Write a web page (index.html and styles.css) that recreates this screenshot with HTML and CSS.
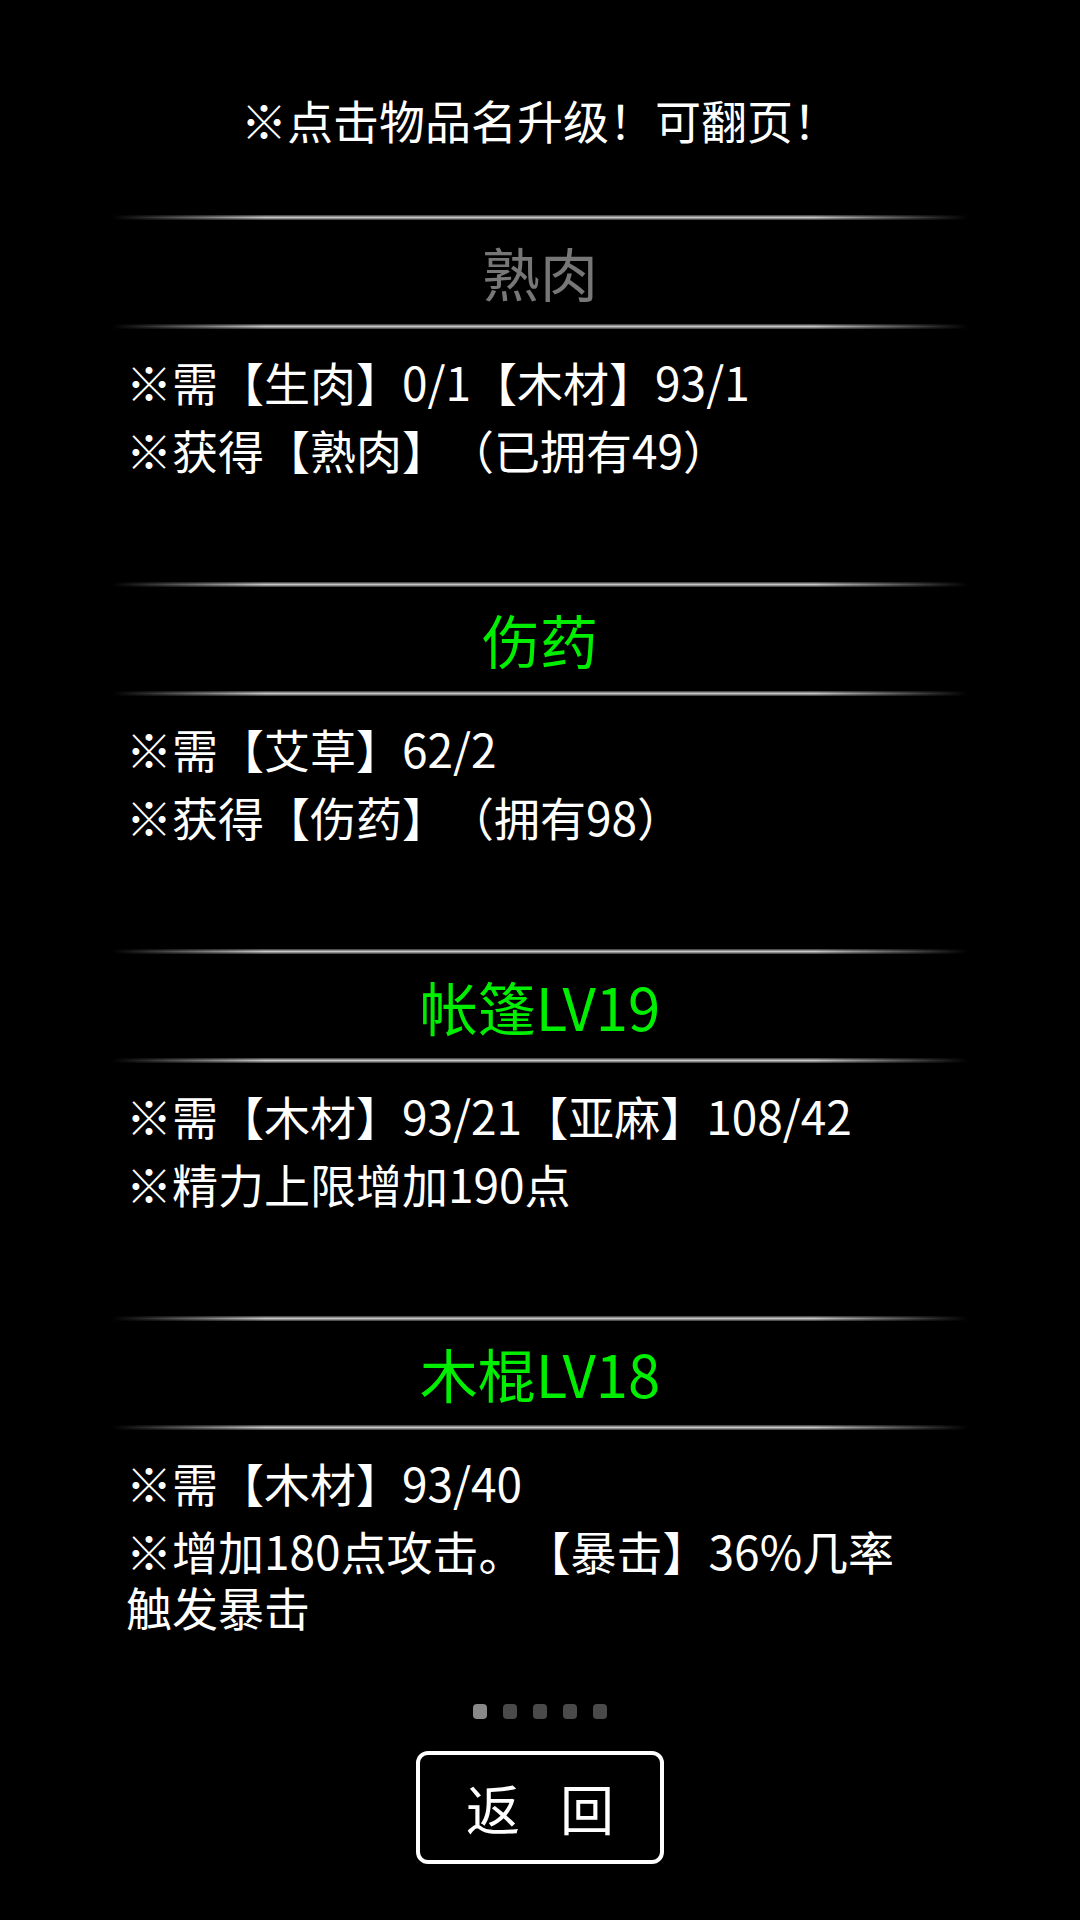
FILE: index.html
```html
<!DOCTYPE html>
<html lang="zh-CN">
<head>
    <meta charset="UTF-8">
    <meta name="viewport" content="width=device-width, initial-scale=1.0">
    <title>升级</title>
    <link rel="stylesheet" href="styles.css">
</head>
<body>
    <div class="page">
        <p class="tip">※点击物品名升级！可翻页！</p>

        <div class="list">
            <div class="item">
                <div class="line"></div>
                <div class="name off">熟肉</div>
                <div class="line"></div>
                <div class="desc">
                    <p>※需【生肉】0/1【木材】93/1</p>
                    <p>※获得【熟肉】（已拥有49）</p>
                </div>
            </div>

            <div class="item">
                <div class="line"></div>
                <div class="name">伤药</div>
                <div class="line"></div>
                <div class="desc">
                    <p>※需【艾草】62/2</p>
                    <p>※获得【伤药】（拥有98）</p>
                </div>
            </div>

            <div class="item">
                <div class="line"></div>
                <div class="name">帐篷LV19</div>
                <div class="line"></div>
                <div class="desc">
                    <p>※需【木材】93/21【亚麻】108/42</p>
                    <p>※精力上限增加190点</p>
                </div>
            </div>

            <div class="item">
                <div class="line"></div>
                <div class="name">木棍LV18</div>
                <div class="line"></div>
                <div class="desc">
                    <p>※需【木材】93/40</p>
                    <p>※增加180点攻击。【暴击】36%几率触发暴击</p>
                </div>
            </div>
        </div>

        <div class="dots">
            <span class="dot on"></span>
            <span class="dot"></span>
            <span class="dot"></span>
            <span class="dot"></span>
            <span class="dot"></span>
        </div>

        <button type="button" class="back"><span>返</span><span>回</span></button>
    </div>
</body>
</html>
```

FILE: styles.css
```css
body {
    margin: 0;
    background-color: #000;
    color: #fff;
    font-family: "Noto Sans CJK SC", "Noto Sans", sans-serif;
    text-spacing-trim: space-all;
}
.page {
    width: 1080px;
    min-height: 1920px;
    display: flex;
    flex-direction: column;
    align-items: center;
}
.tip {
    margin: 87px 0 0;
    font-size: 46px;
    line-height: 64px;
    text-align: center;
}
.list {
    width: 856px;
    margin-top: 64px;
}
.line {
    height: 5px;
    background: linear-gradient(to bottom, #333, #c8c8c8 50%, #333);
    -webkit-mask-image: linear-gradient(to right, transparent, #000 18%, #000 82%, transparent);
    mask-image: linear-gradient(to right, transparent, #000 18%, #000 82%, transparent);
}
.name {
    height: 104px;
    display: flex;
    align-items: center;
    justify-content: center;
    font-size: 58px;
    color: #00ee00;
}
.name.off {
    color: #777;
}
.desc {
    box-sizing: border-box;
    min-height: 253px;
    padding: 24px 40px 0 14px;
    font-size: 46px;
    line-height: 56px;
}
.desc p {
    margin: 0 0 12px;
}
.dots {
    display: flex;
    gap: 16px;
    margin-top: 21px;
}
.dot {
    width: 14px;
    height: 15px;
    border-radius: 4px;
    background-color: #4a4a4a;
}
.dot.on {
    background-color: #888;
}
.back {
    margin-top: 32px;
    width: 248px;
    height: 113px;
    display: flex;
    align-items: center;
    justify-content: center;
    gap: 40px;
    background-color: #000;
    color: #fff;
    border: 4px solid #fff;
    border-radius: 12px;
    font-family: inherit;
    font-size: 54px;
    padding: 0;
}
```
